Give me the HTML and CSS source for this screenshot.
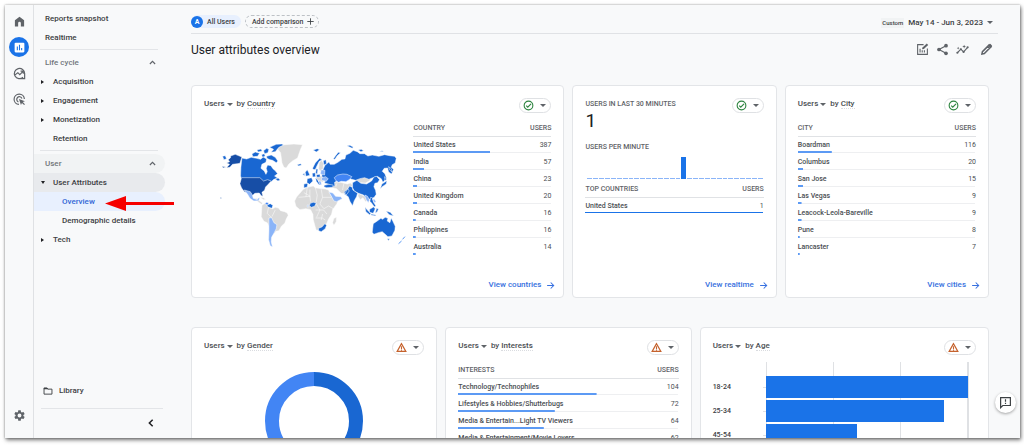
FILE: index.html
```html
<!DOCTYPE html>
<html lang="en">
<head>
<meta charset="utf-8">
<meta name="viewport" content="width=device-width, initial-scale=1">
<title>User attributes overview</title>
<link rel="stylesheet" href="styles.css">
</head>
<body>
<svg class="defs" aria-hidden="true">
  <symbol id="i-ok" viewBox="0 0 24 24"><circle cx="12" cy="12" r="9.5" fill="none" stroke="#2e8540" stroke-width="2.4"/><path d="M7 12.2l3.4 3.4L17.500 8.500" fill="none" stroke="#2e8540" stroke-width="2.600"/></symbol>
  <symbol id="i-warn" viewBox="0 0 24 24"><path d="M12 3.500L2.500 20.500h19z" fill="none" stroke="#c5622d" stroke-width="2.600"/><path d="M12 9.500v5.500M12 16.500v2.500" stroke="#c5622d" stroke-width="2.400"/></symbol>
  <symbol id="i-arrow" viewBox="0 0 24 24"><path d="M3 12h17M12.500 4l8 8-8 8" fill="none" stroke="currentColor" stroke-width="2.800"/></symbol>
  <symbol id="i-up" viewBox="0 0 24 24"><path d="M5 16l7-7 7 7" fill="none" stroke="currentColor" stroke-width="3"/></symbol>
</svg>
<div class="app">
  <nav class="rail" aria-label="Primary">
    <a href="#home" aria-label="Home"><svg viewBox="0 0 24 24"><path d="M3.500 21V9.500L12 3l8.500 6.500V21H14.500v-6a2.500 2.500 0 0 0-5 0v6z" fill="#5f6368"/></svg></a>
    <a href="#reports" class="rail-active" aria-label="Reports"><svg viewBox="0 0 24 24"><rect x="3" y="3" width="18" height="18" rx="2" fill="#fff"/><path d="M8 10v7M12 7v10M16 13v4" stroke="#1a73e8" stroke-width="2"/></svg></a>
    <a href="#explore" aria-label="Explore"><svg viewBox="0 0 24 24" fill="none" stroke="#5f6368" stroke-width="2.200"><path d="M18.500 19A9.500 9.500 0 1 1 21.500 12v9.500h-7"/><path d="M3 15l6-4.500 3.500 3.500 6-6M14 7.500h5v5"/></svg></a>
    <a href="#ads" aria-label="Advertising"><svg viewBox="0 0 24 24" fill="none" stroke="#5f6368" stroke-width="2.200"><path d="M11 21A9.500 9.500 0 1 1 21 11"/><path d="M10 16.500A5 5 0 1 1 16.500 10"/><path d="M11 11l11 4-4 1.800 4 4-1.500 1.500-4-4-1.800 4z" fill="#5f6368" stroke="none"/></svg></a>
    <a href="#admin" class="rail-end" aria-label="Admin"><svg viewBox="0 0 24 24"><path fill="#5f6368" d="M19.140 12.940c.04-.3.06-.61.06-.94 0-.32-.02-.64-.07-.94l2.030-1.580a.49.49 0 0 0 .12-.61l-1.920-3.320a.49.49 0 0 0-.59-.22l-2.390.96c-.5-.38-1.030-.7-1.620-.94l-.36-2.540a.48.48 0 0 0-.48-.41h-3.840a.47.47 0 0 0-.47.41l-.36 2.540c-.59.24-1.130.57-1.620.94l-2.390-.96a.47.47 0 0 0-.59.22L2.740 8.870a.47.47 0 0 0 .12.610l2.030 1.580c-.05.3-.09.63-.09.94s.02.64.07.94l-2.030 1.580a.49.49 0 0 0-.12.610l1.920 3.320c.12.22.37.29.59.22l2.390-.96c.5.38 1.030.7 1.620.94l.36 2.540c.05.24.24.41.48.41h3.840c.24 0 .44-.17.47-.41l.36-2.540c.59-.24 1.130-.56 1.620-.94l2.390.96c.22.08.47 0 .59-.22l1.920-3.320a.47.47 0 0 0-.12-.61zM12 15.600A3.600 3.600 0 1 1 12 8.400a3.600 3.600 0 0 1 0 7.200z"/></svg></a>
  </nav>

  <nav class="side" aria-label="Reports">
    <a class="item" href="#snapshot">Reports snapshot</a>
    <a class="item" href="#realtime">Realtime</a>
    <hr>
    <button class="item group" type="button">Life cycle<svg><use href="#i-up"/></svg></button>
    <a class="item sub closed" href="#acquisition">Acquisition</a>
    <a class="item sub closed" href="#engagement">Engagement</a>
    <a class="item sub closed" href="#monetization">Monetization</a>
    <a class="item sub" href="#retention">Retention</a>
    <hr>
    <button class="item group shade" type="button">User<svg><use href="#i-up"/></svg></button>
    <a class="item sub open" href="#attributes">User Attributes</a>
    <a class="item leaf current" href="#overview">Overview
      <svg class="pointer" viewBox="0 0 69 15" aria-hidden="true"><path d="M0 7.500L21 0v6h48v3H21v6z" fill="#f60000"/></svg></a>
    <a class="item leaf" href="#demographic">Demographic details</a>
    <a class="item sub closed" href="#tech">Tech</a>
    <a class="item library" href="#library"><svg viewBox="0 0 24 24"><path d="M2.500 5h7l2 2.500h10v12h-19z" fill="none" stroke="#3c4043" stroke-width="2.200"/><path d="M2 4h8l3 4H2z" fill="#3c4043"/></svg>Library</a>
    <div class="side-foot"><button type="button" aria-label="Collapse"><svg viewBox="0 0 24 24"><path d="M16 4l-8 8 8 8" fill="none" stroke="#202124" stroke-width="3.600"/></svg></button></div>
  </nav>

  <main class="main">
    <div class="topbar">
      <button class="chip" type="button"><span class="avatar">A</span>All Users</button>
      <button class="chip add" type="button">Add comparison<svg viewBox="0 0 24 24"><path d="M12 1v22M1 12h22" stroke="#3c4043" stroke-width="3"/></svg></button>
      <button class="range" type="button"><span class="tag">Custom</span>May 14 - Jun 3, 2023<i class="caret"></i></button>
    </div>
    <header class="head">
      <h1>User attributes overview</h1>
      <div class="tools">
        <button type="button" aria-label="Customize report"><svg viewBox="0 0 24 24" fill="none" stroke="#5f6368" stroke-width="2"><path d="M14 3H3v18h18V10"/><path d="M7.500 17.500v-7M11.500 17.500v-4M15.500 17.500v-4"/><path d="M11 11.500l1-3L20 1l2.500 2.500L14.500 11z" fill="#5f6368" stroke="none"/></svg></button>
        <button type="button" aria-label="Share"><svg viewBox="0 0 24 24" fill="#5f6368"><path d="M18.500 5L5.500 12l13 7" fill="none" stroke="#5f6368" stroke-width="2.200"/><circle cx="18.500" cy="5" r="3.400"/><circle cx="5.500" cy="12" r="3.400"/><circle cx="18.500" cy="19" r="3.400"/></svg></button>
        <button type="button" aria-label="Insights"><svg viewBox="0 0 24 24" fill="#5f6368"><path d="M2.500 18l6.500-6.500 5 5L21.500 8" fill="none" stroke="#5f6368" stroke-width="2"/><circle cx="2.500" cy="18" r="2"/><circle cx="9" cy="11.500" r="2"/><circle cx="14" cy="16.500" r="2"/><circle cx="21.500" cy="8" r="2"/><path d="M15 3l1 2.500 2.500 1L16 7.500 15 10l-1-2.500-2.500-1 2.500-1zM4 7l.8 1.700 1.700.8-1.700.8L4 12l-.8-1.700-1.700-.8 1.700-.8z"/></svg></button>
        <button type="button" class="edit" aria-label="Edit"><svg viewBox="0 0 24 24"><path d="M3.500 20.500l1-4.500L16.500 4l3.500 3.500-12 12zM14 6.500l3.500 3.500" fill="none" stroke="#5f6368" stroke-width="2.800"/><path d="M15 4.500l2.500-2.500a1.500 1.500 0 0 1 2 0L22 4.500a1.500 1.500 0 0 1 0 2L19.500 9z" fill="#5f6368"/></svg></button>
      </div>
    </header>

    <div class="cards row-one">
      <section class="card">
        <div class="card-head">
          <h2><button type="button">Users<i class="caret"></i></button>by <span class="dim">Country</span></h2>
          <button class="status" type="button" aria-label="Data quality"><svg><use href="#i-ok"/></svg><i class="caret"></i></button>
        </div>
        <div class="geo">
          <svg class="map" viewBox="0 0 570 390" role="img" aria-label="Users by country on a world map" stroke="#fff" stroke-width="1.500" stroke-linejoin="round">
            <g fill="#dadada">
              <path d="M190 49l18-5 28-2 26 2-6 14-5 14-4 12-14 8-12 10-8 12-7-2-6-14-2-16-2-14-8-10z"/>
              <path d="M140 226l9-6 8 2 3 10 12 4 8-4 10 2 6 8 12 3 8 4 3 7-6 11-4 12-10 9-8 14-9 2-6 8-4-14-10-8-6-12-10-4-8-14z"/>
              <path d="M118 204l10 2 6 8 8 5-3 4-10-7zM134 202l10 1 8 5-7 1z"/>
              <path d="M264 178l12-6 18-4 6 5 10 2 20 2 10 3 6 14 9 15 14 0-4 12-13 18-3 14-9 14-6 14-9 10-13 9-9 1-4-14-5-18-1-16-7-14-14-3-18 3-12-10-4-16 6-12z"/>
              <path d="M356 265l8-3-1 13-7 11-4-8zM340 153l8 8 14-5 14 1 20 5 10-3 6 7-13 12-6 14-15-2-14-14-10-2-8-2-8 2-4-8z"/>
              <path d="M416 142l14-5 15 3 14-4 10 5-4 10-14 8-16-1-14-6zM312 97l7-6 6 9-1 15-9 9-5-8zM430 190l12 6 8 4 5 12-4 3-8-12-8 6-7-11zM302 142l24-6 8 10-12 10-14-4z"/>
            </g>
            <path d="M250 202l34-3 2 16M284 178v24M300 172l6 24-3 20M318 178l4 24h26M322 202l-8 20 12 14M301 218l13 22-10 22M326 236l14-8 14 8M301 240h24l10 12M301 264h20l9 6M322 252l-4 18M276 173l-4 28M266 188l18 10M160 232l-4 18 14 14M180 240l-10 20M365 160l-3 10M386 160l-4 20" fill="none"/>
            <g fill="#1967d2">
              <path d="M80 84l14 3 14-5 16 3 12 3 8-7 10 6-2 10-12 6-3 12 10 8 5 10 4-8-3-10 4-10 10 2 6 9 8 7 6 8-9 7 10 7-12 3-9 8-6-2-10 9-4-7-12-5H79l-3-14 1-25z"/>
              <path d="M110 72l10-6 13 4-6 9-14 1zM125 60l12-3 4 6-12 3zM145 62l9-7 7 3-3 10-10 3zM163 52l20-9 17-1 5 3-14 7-11 13-12 2 7-9zM154 79l14-4 12 7 8 11-5 5-11-7-8-2-9-4zM139 74l8-3 3 7-8 4zM180 147l9-3 6 6-7 3z"/>
              <path d="M329 106l12-10 4 7 12 0 11-6 12-9 9-1 3-12 12-5 10-9 12 4 8 6 14 0 10 7 13-3 20 4 17-5 15 3 15 2 5 6-3 14-9 5-3 8 7 6-6 14-9-6-3-12-10 1-6 9 8 7 5 14-11 12-5-11-12-7-13 4-12 5-13-5-14 3-13 5-14-4-9-4-14-2-14 4-4 7-8 5 1 11-7 3-10-8-14-4 2-11-9-6-2-12z"/>
              <path d="M354 87l7-10 8-10 7 1-10 9-7 11zM395 47l9-1 10 5-3 4zM429 60l9-2 7 4-8 3zM294 60l12-4 7 3-10 7zM492 64l9-2 4 3z"/>
              <path d="M412 158l13-7 12 9 17 2 15-9 7-12 8-2 9 10-6 9-8 2-3 10 5 11 2 12-6 9-12 6-13-3-7-10-15-5-13-7-5-10z"/>
              <path d="M396 179l7-11 8 4 2 8 14 10-3 10-7 12-5 15-8-13-5-14-12-8zM386 186l12-10 4 7-9 12z"/>
              <path d="M474 281l12-8 11-8 5 3 8-6 8 3-2 8 8 5 4-14 5 10 7 15-1 12-9 17-12 2-8-7-9-8-12 3-13 5-5-6z"/>
              <path d="M310 295l10-4 9-10 5 5-4 10-12 9-8-3zM285 220l9-3 9 2-5 10-10 3-5-5zM157 224l8-3 8 5-3 9-9-3-6-4z"/>
              <path d="M266 162l12-2-2 11-10 3zM276 146l13-3 4 10-10 10-8-5zM270 127l6-8 4 8 4 9-12 3zM262 133l6-3 0 7zM246 104l10-3 3 4-9 3zM292 115l8-16 13-14 8 4-9 5-7 14-5 11-6-1zM303 116l5 2-2 14-5-2zM327 166l14-3 13 2-2 7-18 1-8-3zM301 143l4 4 11 16-4 2-9-11zM291 130l9-2 1 12-9 1zM303 134l11-1 1 8-10 1zM324 92l8-3 2 12-8 4z"/>
              <path d="M508 140l6 8-5 4zM500 162l8-5 7-5-2 10-12 8-6 7zM484 235l6 2-4 8-6 5zM449 232l11 12 7 7-4 3-11-9zM463 238l12-7 5 5-6 14-11-3zM468 252l14 3-1 3-14-3zM512 243l13 4 10 11-13-4zM466 202l5 1 4 14 7 11-5 2-8-11-5-5zM516 326l7 0-3 6z"/>
              <path d="M520 110l8 6 2 10-7-7zM22 79l8-2 4 9-8 3z"/>
            </g>
            <path d="M46 78l14-5 20 8-6 19-8 1-14 2-8 9-10 1 9-10-9-4 9-4-4-6 7-6zM79 143h55l11 10 12-4 11 4-9 10-8 8-3 10-8 6 3 12-5-2-6-8-13 1-9 8-6-9-16-3-9-12-5-13zM20 109l12 2-8 3zM15 202l5 2-4 2z" fill="#174ea6"/>
            <g fill="#8ab4f8">
              <path d="M87 180l18 5 6 9 3 11 12 4 3-5 5-1-4 9-14 1-12-8-7-12z"/>
              <path d="M161 264l8-1 7 15 9 6-2 12-7 14-7 12-1 14 4 15-7-4-5-18 1-27zM341 186l12 3 8 10 16 1 4 6-17 9-8-2-8-15zM319 143l12-3 8 6-6 8-14-3zM318 119l11 2-1 14-13-3zM449 195l8 4 6 11-4 8-7-10z"/>
              <path d="M276 225l3-1v8l-3-1zM309 153l8 1 2 10-4 1zM472 208l6 0 4 7-4 4z"/>
            </g>
            <path d="M357 143l10-8 16-3 12 1 15 7-8 9-10 6-14-1-8 3-8-5zM153 217l8 2-4 6-8-3z" fill="#4285f4"/>
            <path d="M569 320l-7 8M559 333l-9 8" fill="none" stroke="#5c9af4" stroke-width="3"/>
          </svg>
          <table class="list">
            <thead><tr><th scope="col">COUNTRY</th><th scope="col">USERS</th></tr></thead>
            <tbody>
              <tr style="--w:56%"><td>United States</td><td>387</td></tr>
              <tr style="--w:8%"><td>India</td><td>57</td></tr>
              <tr style="--w:3%"><td>China</td><td>23</td></tr>
              <tr style="--w:3%"><td>United Kingdom</td><td>20</td></tr>
              <tr style="--w:2%"><td>Canada</td><td>16</td></tr>
              <tr style="--w:2%"><td>Philippines</td><td>16</td></tr>
              <tr style="--w:2%"><td>Australia</td><td>14</td></tr>
            </tbody>
          </table>
        </div>
        <a class="more" href="#countries">View countries<svg><use href="#i-arrow"/></svg></a>
      </section>

      <section class="card">
        <div class="card-head">
          <div><h3>USERS IN LAST 30 MINUTES</h3><p class="big">1</p></div>
          <button class="status" type="button" aria-label="Data quality"><svg><use href="#i-ok"/></svg><i class="caret"></i></button>
        </div>
        <h3>USERS PER MINUTE</h3>
        <div class="spark"><i></i><i></i><i></i><i></i><i></i><i></i><i></i><i></i><i></i><i></i><i></i><i></i><i></i><i></i><i></i><i></i><i class="hit"></i><i></i><i></i><i></i><i></i><i></i><i></i><i></i><i></i><i></i><i></i><i></i><i></i><i></i></div>
        <table class="list strong">
          <thead><tr><th scope="col">TOP COUNTRIES</th><th scope="col">USERS</th></tr></thead>
          <tbody><tr style="--w:100%"><td>United States</td><td>1</td></tr></tbody>
        </table>
        <a class="more" href="#live">View realtime<svg><use href="#i-arrow"/></svg></a>
      </section>

      <section class="card">
        <div class="card-head">
          <h2><button type="button">Users<i class="caret"></i></button>by <span class="dim">City</span></h2>
          <button class="status" type="button" aria-label="Data quality"><svg><use href="#i-ok"/></svg><i class="caret"></i></button>
        </div>
        <table class="list">
          <thead><tr><th scope="col">CITY</th><th scope="col">USERS</th></tr></thead>
          <tbody>
            <tr style="--w:19%"><td>Boardman</td><td>116</td></tr>
            <tr style="--w:3%"><td>Columbus</td><td>20</td></tr>
            <tr style="--w:3%"><td>San Jose</td><td>15</td></tr>
            <tr style="--w:2%"><td>Las Vegas</td><td>9</td></tr>
            <tr style="--w:2%"><td>Leacock-Leola-Bareville</td><td>9</td></tr>
            <tr style="--w:1%"><td>Pune</td><td>8</td></tr>
            <tr style="--w:1%"><td>Lancaster</td><td>7</td></tr>
          </tbody>
        </table>
        <a class="more" href="#cities">View cities<svg><use href="#i-arrow"/></svg></a>
      </section>
    </div>

    <div class="cards row-two">
      <section class="card">
        <div class="card-head">
          <h2><button type="button">Users<i class="caret"></i></button>by <span class="dim">Gender</span></h2>
          <button class="status" type="button" aria-label="Data quality"><svg><use href="#i-warn"/></svg><i class="caret"></i></button>
        </div>
        <svg class="donut" viewBox="0 0 98 98" role="img" aria-label="Users by gender" fill="none" stroke-width="14"><path d="M49 7a42 42 0 0 1 0 84" stroke="#1967d2"/><path d="M49 91a42 42 0 0 1 0-84" stroke="#4285f4"/></svg>
      </section>

      <section class="card">
        <div class="card-head">
          <h2><button type="button">Users<i class="caret"></i></button>by <span class="dim">Interests</span></h2>
          <button class="status" type="button" aria-label="Data quality"><svg><use href="#i-warn"/></svg><i class="caret"></i></button>
        </div>
        <table class="list">
          <thead><tr><th scope="col">INTERESTS</th><th scope="col">USERS</th></tr></thead>
          <tbody>
            <tr style="--w:63%"><td>Technology/Technophiles</td><td>104</td></tr>
            <tr style="--w:44%"><td>Lifestyles &amp; Hobbies/Shutterbugs</td><td>72</td></tr>
            <tr style="--w:39%"><td>Media &amp; Entertain...Light TV Viewers</td><td>64</td></tr>
            <tr style="--w:38%"><td>Media &amp; Entertainment/Movie Lovers</td><td>62</td></tr>
          </tbody>
        </table>
      </section>

      <section class="card">
        <div class="card-head">
          <h2><button type="button">Users<i class="caret"></i></button>by <span class="dim">Age</span></h2>
          <button class="status" type="button" aria-label="Data quality"><svg><use href="#i-warn"/></svg><i class="caret"></i></button>
        </div>
        <div class="ages">
          <div class="age-labels"><span>18-24</span><span>25-34</span><span>45-54</span></div>
          <div class="age-bars"><i style="width:100%"></i><i style="width:88%"></i><i style="width:45%"></i></div>
        </div>
      </section>
    </div>
  </main>
  <button class="feedback" type="button" aria-label="Send feedback"><svg viewBox="0 0 24 24"><path d="M3 3h18v14.500H7L3 21.500z" fill="none" stroke="#3c4043" stroke-width="2.200"/><path d="M12 6v4.500M12 12.500v2.300" stroke="#3c4043" stroke-width="2.200"/></svg></button>
</div>
</body>
</html>
```

FILE: styles.css
```css
* { box-sizing: border-box; }

body {
  margin: 0;
  padding: 5px 4px 7px 5px;
  height: 100vh;
  background: #fff;
  color: #3c4043;
  font: 500 8px/10px Roboto, "Liberation Sans", sans-serif;
}

button {
  padding: 0;
  border: 0;
  background: none;
  color: inherit;
  font: inherit;
  display: inline-flex;
  align-items: center;
}

a { color: inherit; text-decoration: none; }
h1, h2, h3, p { margin: 0; font: inherit; }
.defs { position: absolute; width: 0; height: 0; }

.caret {
  width: 0;
  border: solid transparent;
  border-width: 3px 3px 0;
  border-top-color: #5f6368;
}

.app {
  position: relative;
  display: flex;
  height: 100%;
  overflow: hidden;
  background: #f8f9fa;
  box-shadow: 0 0 2px rgba(0, 0, 0, .3), 1px 2px 4px rgba(0, 0, 0, .55);
}

/* Icon rail */
.rail {
  flex: none;
  display: flex;
  flex-direction: column;
  align-items: center;
  gap: 6px;
  width: 29px;
  padding: 6px 0 13px;
  border-right: 1px solid #dfe1e4;
}
.rail a {
  display: grid;
  place-items: center;
  width: 20px;
  height: 20px;
  border-radius: 50%;
}
.rail svg { width: 13px; height: 13px; }
.rail .rail-active { background: #1a73e8; }
.rail .rail-end { margin-top: auto; }

/* Report navigation */
.side {
  flex: none;
  display: flex;
  flex-direction: column;
  width: 135px;
  padding-top: 4px;
}
.item {
  position: relative;
  flex: none;
  display: flex;
  align-items: center;
  width: 131px;
  height: 19px;
  padding: 0 8px 0 11px;
  border-radius: 0 10px 10px 0;
}
.side hr {
  flex: none;
  width: 118px;
  height: 1px;
  margin: 2px 0 3px 6px;
  border: 0;
  background: #e3e5e8;
}
.group { justify-content: space-between; color: #70757a; }
.group svg { width: 9px; height: 9px; color: #5f6368; }
.shade { background: #f1f3f4; }
.sub { padding-left: 19px; }
.closed, .open { padding-left: 7px; gap: 9px; }
.closed::before {
  content: "";
  border: solid transparent;
  border-width: 2px 0 2px 3px;
  border-left-color: #202124;
}
.open { gap: 8px; background: #e8eaed; }
.open::before {
  content: "";
  border: solid transparent;
  border-width: 3px 2px 0;
  border-top-color: #202124;
}
.leaf { padding-left: 28px; }
.current { background: #e8f0fe; color: #3267d6; }
.pointer {
  position: absolute;
  left: 71px;
  top: 4px;
  width: 69px;
  height: 15px;
}
.library { margin-top: auto; gap: 6px; padding-left: 9px; }
.library svg { width: 10px; height: 10px; }
.side-foot {
  display: flex;
  justify-content: flex-end;
  margin: 8px 6px 0 7px;
  padding: 9px 7px 10px;
  border-top: 1px solid #e3e5e8;
}
.side-foot svg { width: 10px; height: 10px; }

/* Report canvas */
.main {
  flex: 1;
  min-width: 0;
  padding: 8px 22px 0;
}
.topbar {
  display: flex;
  align-items: center;
  gap: 4px;
  height: 21px;
  padding-bottom: 3px;
  border-bottom: 1px solid #e0e2e5;
}
.chip {
  gap: 4px;
  height: 13px;
  padding-right: 6px;
  border-radius: 7px;
  background: #e8f0fe;
  font-size: 7px;
}
.avatar {
  width: 12px;
  height: 12px;
  border-radius: 50%;
  background: #1a73e8;
  color: #fff;
  line-height: 12px;
  font-weight: 700;
}
.add {
  gap: 4px;
  padding: 0 4px 0 6px;
  border: 1px dashed #bdc1c6;
  background: none;
}
.add svg { width: 7px; height: 7px; }
.range { margin-left: auto; padding: 2px 5px 0 0; gap: 4px; }
.tag {
  padding: 0 1px;
  background: #f1f3f4;
  font-size: 6px;
}
.head {
  display: flex;
  align-items: center;
  justify-content: space-between;
  height: 51px;
  padding: 0 5px 19px 0;
}
.head h1 {
  color: #202124;
  font-size: 12px;
  font-weight: 400;
  line-height: 16px;
}
.tools { display: flex; gap: 7px; padding-bottom: 2px; }
.tools svg { width: 13px; height: 13px; }
.tools .edit { margin-left: 4px; }

.cards { display: grid; gap: 8px; padding-right: 9px; }
.row-one { grid-template-columns: 373fr 204fr 204fr; }
.row-two { grid-template-columns: 246fr 246fr 289fr; margin-top: 29px; }
.card {
  display: flex;
  flex-direction: column;
  min-width: 0;
  min-height: 213px;
  padding: 12px 12px 7px;
  border: 1px solid #e3e5e8;
  border-radius: 4px;
  background: #fff;
}
.card-head {
  display: flex;
  justify-content: space-between;
  height: 22px;
}
.card-head h2 { padding-top: 1px; color: #4a4e52; }
.card-head h2 button { gap: 2px; margin-right: 4px; }
.dim { border-bottom: 1px dotted #dadce0; }
.status {
  gap: 6px;
  width: 32px;
  height: 15px;
  padding-left: 3px;
  border: 1px solid #dfe1e4;
  border-radius: 8px;
}
.status svg { width: 11px; height: 11px; }

.list {
  width: 100%;
  border-collapse: collapse;
  color: #4a4e52;
  font-size: 7px;
  line-height: 10px;
}
.list th {
  height: 16px;
  padding: 1px 0 0;
  border-bottom: 1px solid #e0e2e5;
  color: #5f6368;
  font-weight: 500;
  text-align: left;
}
.list tbody tr {
  height: 17px;
  background:
    linear-gradient(#5c9af4, #5c9af4) 0 100% / var(--w) 2px no-repeat,
    linear-gradient(#eeeff1, #eeeff1) 0 100% / 100% 1px no-repeat;
}
.list tbody tr:last-child:not(:only-child) {
  background:
    linear-gradient(#5c9af4, #5c9af4) 0 100% / var(--w) 2px no-repeat;
}
.list td { padding: 1px 0 0; }
.list th:last-child, .list td:last-child { text-align: right; }
.list td:last-child { font-weight: 400; }

.geo { display: flex; }
.map { flex: 1; min-width: 0; height: 130px; margin: 10px 0 0 3px; }
.geo .list { flex: none; width: 138px; align-self: flex-start; }

.more {
  display: flex;
  align-items: center;
  gap: 5px;
  margin: auto -4px 0 auto;
  color: #3871e0;
}
.more svg { width: 9px; height: 9px; }

.card h3 { padding-top: 1px; color: #5f6368; font-size: 7px; }
.big {
  color: #202124;
  font-size: 19px;
  font-weight: 400;
  line-height: 24px;
}
.card-head:has(.big) { height: 43px; }
.spark {
  display: flex;
  align-items: flex-end;
  gap: 1px;
  height: 27px;
  margin: 0 1px 2px 2px;
}
.spark i { flex: 1; height: 1px; background: #8ab4f8; }
.spark .hit { height: 22px; background: #1a73e8; }
.list.strong tbody tr {
  height: 16px;
  background: linear-gradient(#1a73e8, #1a73e8) 0 100% / var(--w) 1px no-repeat;
}

.donut { width: 98px; height: 98px; margin: 10px auto 0; }

.ages { display: flex; font-size: 7px; }
.age-labels {
  display: grid;
  grid-auto-rows: 22px;
  gap: 2px;
  align-items: center;
  align-content: start;
  width: 53px;
  padding-top: 14px;
}
.age-labels span {
  background: linear-gradient(#dfe1e4, #dfe1e4) 100% 50% / 3px 1px no-repeat;
}
.age-bars {
  flex: 1;
  display: flex;
  flex-direction: column;
  gap: 2px;
  height: 120px;
  margin-right: 7px;
  padding-top: 14px;
  border-right: 1px solid #dfe1e4;
  background: repeating-linear-gradient(90deg, #dfe1e4 0 1px, transparent 1px 67px);
}
.age-bars i { height: 22px; background: #1a73e8; }

.feedback {
  position: absolute;
  right: 4px;
  bottom: 25px;
  justify-content: center;
  width: 21px;
  height: 21px;
  border-radius: 50%;
  background: #fff;
  box-shadow: 0 1px 3px rgba(0, 0, 0, .35);
}
.feedback svg { width: 13px; height: 13px; }
```
